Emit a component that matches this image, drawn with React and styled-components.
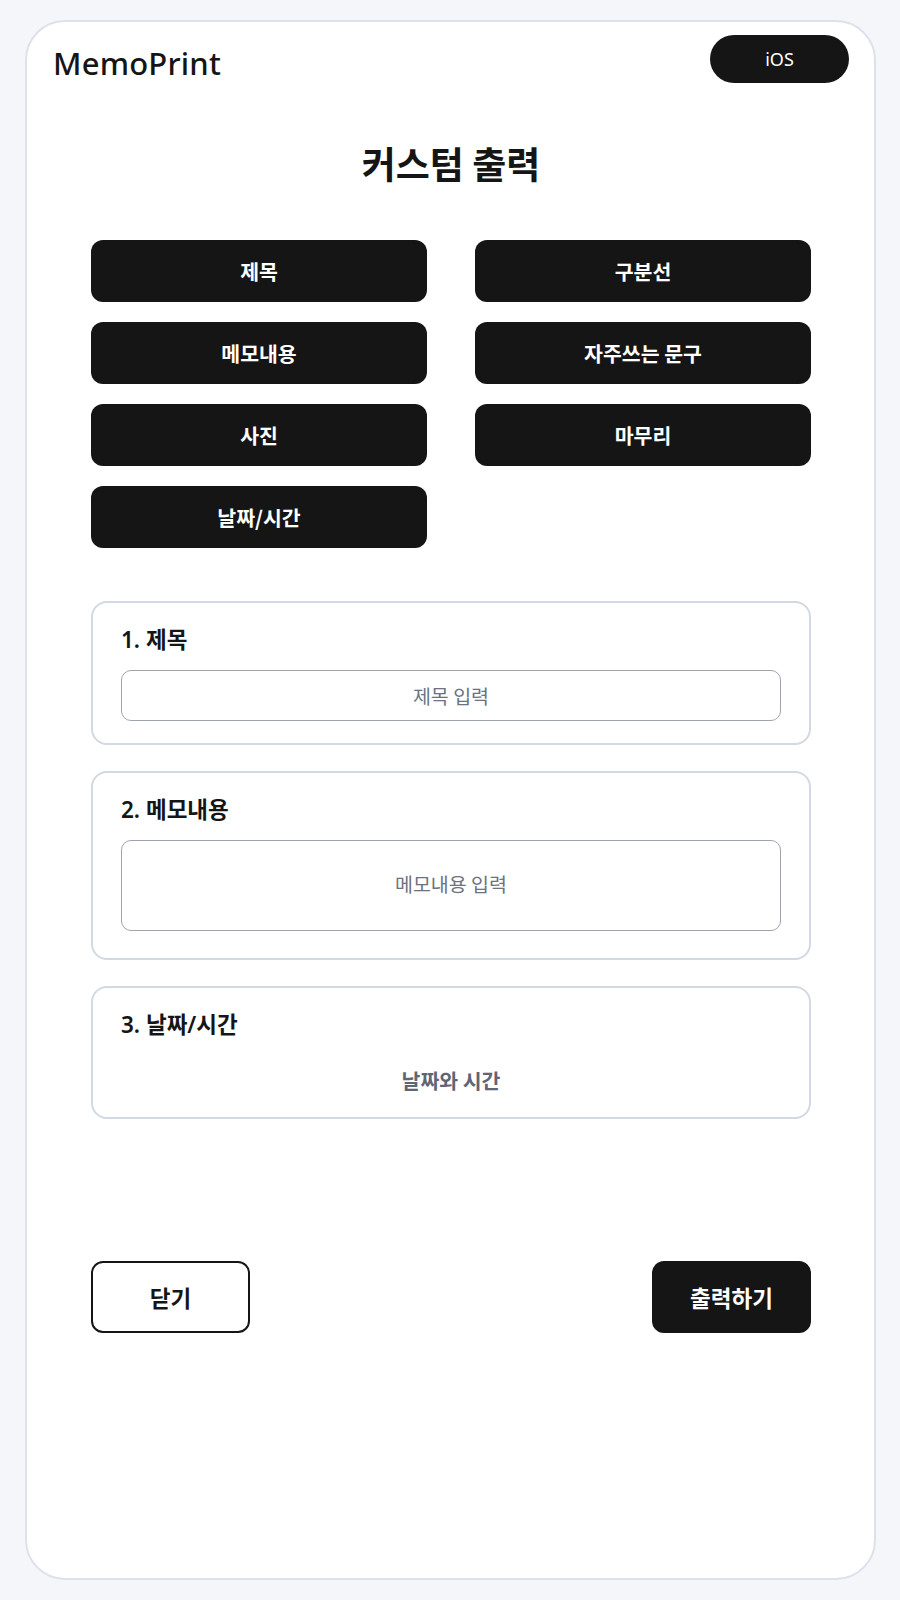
import React, { useState } from "react";
import styled, { createGlobalStyle } from "styled-components";

const GlobalStyle = createGlobalStyle`
  html, body {
    margin: 0;
    padding: 0;
    background: #f5f6fa;
  }
  body {
    font-family: "Noto Sans", "Noto Sans CJK KR", sans-serif;
    color: #151515;
  }
  * {
    box-sizing: border-box;
  }
`;

const Page = styled.div`
  padding: 20px 24px 20px 25px;
`;

const Card = styled.div`
  height: 1560px;
  background: #fff;
  border: 2px solid #dde2ea;
  border-radius: 40px;
  padding: 13px 25px 0 26px;
`;

const Header = styled.header`
  display: flex;
  justify-content: space-between;
  align-items: center;
  height: 48px;
`;

const Logo = styled.div`
  font-size: 31px;
  font-weight: 500;
  color: #151515;
  letter-spacing: 0.2px;
  padding-top: 8px;
`;

const PlatformButton = styled.button`
  width: 139px;
  height: 48px;
  border: none;
  border-radius: 24px;
  background: #151515;
  color: #fff;
  font-family: inherit;
  font-size: 18px;
  cursor: pointer;
`;

const Title = styled.h1`
  margin: 58px 0 0;
  text-align: center;
  font-size: 37px;
  line-height: 44px;
  font-weight: 700;
  font-family: "Noto Sans CJK KR", sans-serif;
`;

const Content = styled.div`
  max-width: 720px;
  margin: 0 auto;
`;

const BlockGrid = styled.div`
  display: grid;
  grid-template-columns: 1fr 1fr;
  column-gap: 48px;
  row-gap: 20px;
  margin-top: 55px;
`;

const BlockButton = styled.button`
  height: 62px;
  border: none;
  border-radius: 12px;
  background: #151515;
  color: #fff;
  font-family: "Noto Sans CJK KR", sans-serif;
  font-size: 20.5px;
  font-weight: 600;
  cursor: pointer;
`;

const SectionList = styled.div`
  display: flex;
  flex-direction: column;
  gap: 26px;
  margin-top: 53px;
`;

const Section = styled.section`
  border: 2px solid #d3d9e2;
  border-radius: 16px;
  padding: 22px 28px 22px 28px;
`;

const SectionLabel = styled.div`
  font-family: "Noto Sans", "Noto Sans CJK KR", sans-serif;
  font-size: 22.5px;
  line-height: 30px;
  font-weight: 600;
  margin-bottom: ${({ $gap }) => $gap || 15}px;
`;

const Field = styled.input`
  display: block;
  width: 100%;
  height: 51px;
  border: 1.5px solid #9ea4ae;
  border-radius: 10px;
  background: #fff;
  text-align: center;
  font-family: "Noto Sans CJK KR", sans-serif;
  font-size: 19.5px;
  color: #151515;
  outline: none;

  &::placeholder {
    color: #6b7280;
  }
`;

const MemoArea = styled.textarea`
  display: block;
  width: 100%;
  height: 91px;
  margin-bottom: 5px;
  border: 1.5px solid #9ea4ae;
  border-radius: 10px;
  background: #fff;
  text-align: center;
  padding: 29px 12px 0;
  font-family: "Noto Sans CJK KR", sans-serif;
  font-size: 19.5px;
  line-height: 28px;
  resize: none;
  outline: none;

  &::placeholder {
    color: #6b7280;
  }
`;

const DateText = styled.div`
  text-align: center;
  font-family: "Noto Sans CJK KR", sans-serif;
  font-size: 20.5px;
  line-height: 30px;
  font-weight: 600;
  color: #5d6576;
`;

const Footer = styled.div`
  display: flex;
  justify-content: space-between;
  margin-top: 142px;
`;

const ActionButton = styled.button`
  width: 159px;
  height: 72px;
  border-radius: 12px;
  border: 2px solid #151515;
  background: ${({ $primary }) => ($primary ? "#151515" : "#fff")};
  color: ${({ $primary }) => ($primary ? "#fff" : "#151515")};
  font-family: "Noto Sans CJK KR", sans-serif;
  font-size: 22.5px;
  font-weight: 600;
  cursor: pointer;
`;

const blocks = ["제목", "구분선", "메모내용", "자주쓰는 문구", "사진", "마무리", "날짜/시간"];

const App = () => {
  const [title, setTitle] = useState("");
  const [memo, setMemo] = useState("");

  return (
    <>
      <GlobalStyle />
      <Page>
        <Card>
          <Header>
            <Logo>MemoPrint</Logo>
            <PlatformButton>iOS</PlatformButton>
          </Header>
          <Title>커스텀 출력</Title>
          <Content>
            <BlockGrid>
              {blocks.map((b) => (
                <BlockButton key={b}>{b}</BlockButton>
              ))}
            </BlockGrid>

            <SectionList>
              <Section>
                <SectionLabel>1. 제목</SectionLabel>
                <Field
                  placeholder="제목 입력"
                  value={title}
                  onChange={(e) => setTitle(e.target.value)}
                />
              </Section>
              <Section>
                <SectionLabel>2. 메모내용</SectionLabel>
                <MemoArea
                  placeholder="메모내용 입력"
                  value={memo}
                  onChange={(e) => setMemo(e.target.value)}
                />
              </Section>
              <Section>
                <SectionLabel $gap={25}>3. 날짜/시간</SectionLabel>
                <DateText>날짜와 시간</DateText>
              </Section>
            </SectionList>

            <Footer>
              <ActionButton>닫기</ActionButton>
              <ActionButton $primary>출력하기</ActionButton>
            </Footer>
          </Content>
        </Card>
      </Page>
    </>
  );
};

export default App;
